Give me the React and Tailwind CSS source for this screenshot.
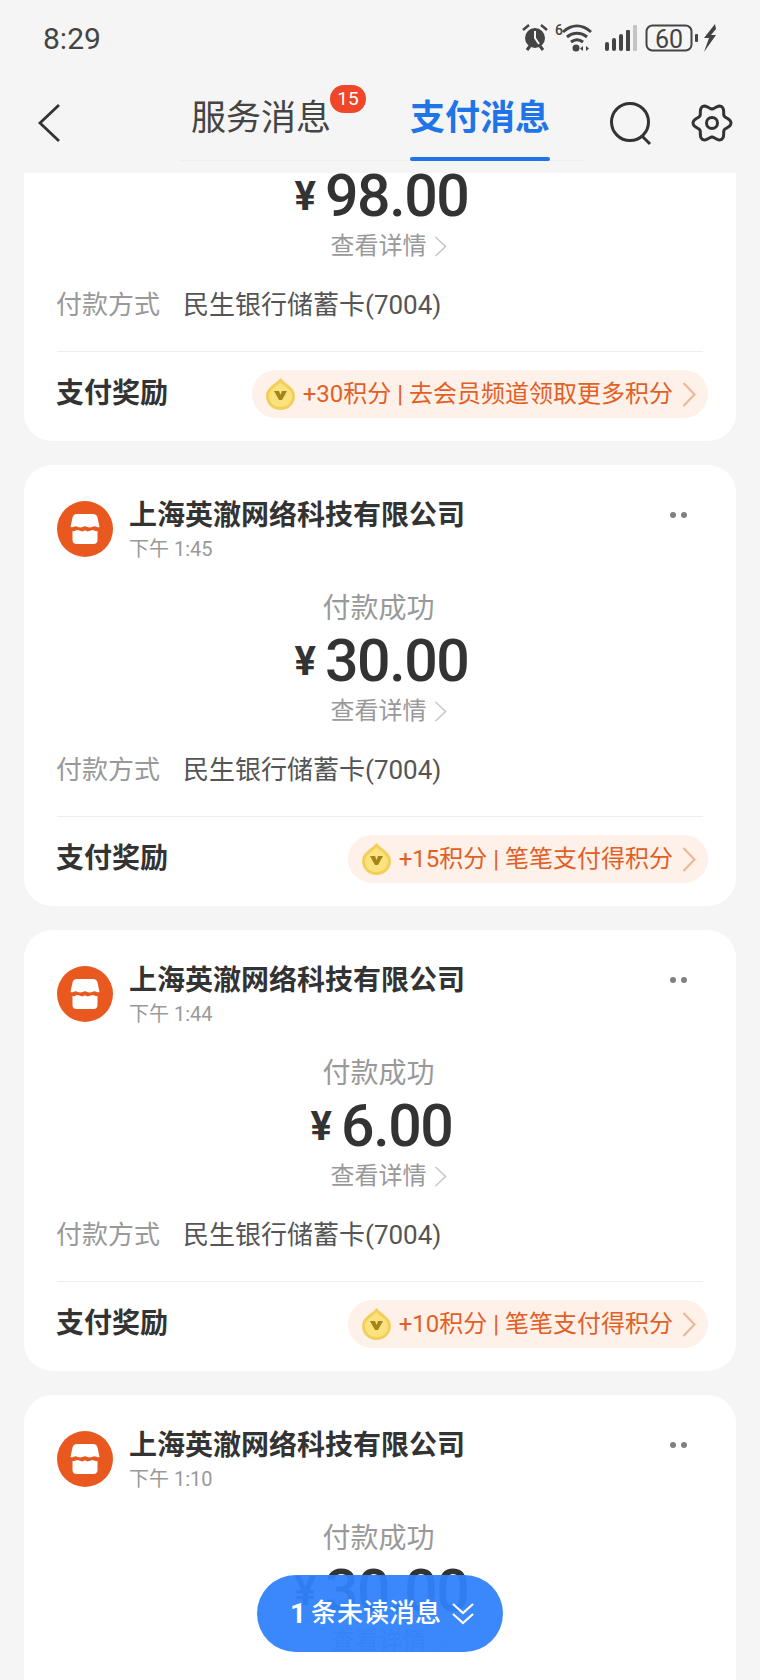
import React from 'react';

const cards = [
  { time: '下午 1:46', amount: '98.00', reward: '+30积分 | 去会员频道领取更多积分' },
  { time: '下午 1:45', amount: '30.00', reward: '+15积分 | 笔笔支付得积分' },
  { time: '下午 1:44', amount: '6.00', reward: '+10积分 | 笔笔支付得积分' },
  { time: '下午 1:10', amount: '30.00', reward: '+15积分 | 笔笔支付得积分' },
];

// six soft lobes round the centre
const gearPath = Array.from({ length: 73 }, (_, i) => {
  const a = (i * 5 * Math.PI) / 180;
  const r = 16.5 + 2.5 * Math.cos(6 * a);
  return `${i === 0 ? 'M' : 'L'}${(21 + r * Math.cos(a)).toFixed(2)} ${(21 + r * Math.sin(a)).toFixed(2)}`;
}).join('') + 'Z';

const StatusIcons = () => (
  <svg width="196" height="30" viewBox="0 0 196 30" className="text-[#444]">
    {/* alarm */}
    <circle cx="13" cy="15" r="10" fill="currentColor" />
    <path d="M13 8v7l4 6" stroke="#f5f5f5" strokeWidth="2" fill="none" />
    <path d="M1 7l6-5M25 7l-6-5" stroke="currentColor" strokeWidth="2.5" />
    <path d="M5 27l3-4M21 27l-3-4" stroke="currentColor" strokeWidth="3" />
    {/* wifi */}
    <text x="33" y="12" fontSize="14" fontWeight="500" fill="currentColor" fontFamily="Roboto, sans-serif">6</text>
    <path d="M41 9c9-8 19-8 28 0M45 14c6-5 14-5 20 0M49 19c4-3 8-3 12 0" stroke="currentColor" strokeWidth="3" fill="none" />
    <circle cx="54" cy="25" r="3.500" fill="currentColor" />
    <path d="M61 23v5l-3-2.500zM64 23v5l3-2.500z" fill="currentColor" />
    {/* signal */}
    <rect x="83" y="19" width="4" height="9" rx="2" fill="currentColor" />
    <rect x="90" y="15" width="4" height="13" rx="2" fill="currentColor" />
    <rect x="97" y="11" width="4" height="17" rx="2" fill="currentColor" />
    <rect x="104" y="7" width="4" height="21" rx="1" fill="currentColor" />
    <rect x="111" y="2" width="4" height="26" rx="1" fill="#c4c4c4" />
    {/* battery */}
    <rect x="124.500" y="2.500" width="45" height="25" rx="6" stroke="currentColor" strokeWidth="2" fill="none" />
    <text x="147" y="24.500" fontSize="25" textAnchor="middle" fill="currentColor" fontFamily="Roboto, sans-serif">60</text>
    <rect x="173" y="11" width="3" height="8" rx="1" fill="currentColor" />
    <path d="M193 1l-11 14h5l-5 14 12-17h-5l5-6-1-5z" fill="currentColor" />
  </svg>
);

const Header = () => (
  <div className="bg-[#f5f5f5] h-[173px] shrink-0">
    <div className="flex items-center justify-between h-[76px] pl-[43px] pr-[42px]">
      <span className="text-[30px] text-[#444]">8:29</span>
      <StatusIcons />
    </div>
    <div className="flex items-start h-[97px] pl-[36px] pr-[27px]">
      <svg width="26" height="40" viewBox="0 0 26 40" className="mt-[27px]">
        <path d="M23 2L4 20l19 18" stroke="#333" strokeWidth="2.800" fill="none" />
      </svg>
      <div className="flex-1">
        <div className="flex gap-[79px] border-b border-[#eeeeee] ml-[118px] pl-[11px] pr-[34px] w-fit h-[85px] items-start">
          <div className="relative pt-[20px]">
            <span className="text-[35px] leading-[46px] text-[#444]">服务消息</span>
            <span className="absolute left-[139px] top-[9px] w-[36px] h-[28px] rounded-full bg-[#f0462a] text-white text-[19px] leading-[28px] text-center">15</span>
          </div>
          <div className="relative pt-[20px] h-[85px]">
            <span className="text-[35px] leading-[46px] font-bold text-[#1f74e8]">支付消息</span>
            <div className="absolute left-0 right-0 bottom-0 h-[4px] rounded-full bg-[#1f74e8]" />
          </div>
        </div>
      </div>
      <svg width="44" height="46" viewBox="0 0 44 46" className="mt-[25px]">
        <circle cx="21" cy="21" r="18.500" stroke="#333" strokeWidth="3" fill="none" />
        <path d="M33 35l8 8" stroke="#333" strokeWidth="3" fill="none" />
      </svg>
      <svg width="42" height="42" viewBox="0 0 42 42" className="ml-[38px] mt-[26px]">
        <path d={gearPath} stroke="#333" strokeWidth="3" fill="none" strokeLinejoin="round" />
        <circle cx="21" cy="21" r="5.500" stroke="#333" strokeWidth="3" fill="none" />
      </svg>
    </div>
  </div>
);

const StoreIcon = () => (
  <div className="w-[56px] h-[56px] rounded-full bg-[#e8581f] flex items-center justify-center shrink-0">
    <svg width="30" height="30" viewBox="0 0 30 30">
      <path d="M7 0h16c2.500 0 4 1.500 4.500 3.500L29.500 13c-2 1-3.500-.8-5-.8s-3 1.300-4.800 1.300-3-1.300-4.700-1.300-3 1.300-4.700 1.300-3.300-1.300-4.800-1.300-3 1.800-5 .8L2.500 3.500C3 1.500 4.500 0 7 0z" fill="#fff" />
      <path d="M2.500 17c2 .6 3.500-.9 5-.9s3 1.300 4.700 1.300 2.800-1.300 2.800-1.300 1.100 1.300 2.800 1.300 3.200-1.300 4.700-1.300 3 1.500 5 .9v9c0 2.500-1.500 4-4 4H6.500c-2.500 0-4-1.500-4-4z" fill="#fff" />
    </svg>
  </div>
);

const Coin = () => (
  <svg width="29" height="32" viewBox="0 0 29 32" className="shrink-0">
    <path d="M14.500 0C18 5 29 9 29 18c0 8-6.500 14-14.500 14S0 26 0 18C0 9 11 5 14.500 0z" fill="#f3cf5a" />
    <path d="M14.500 4C17 8 26 11 26 18c0 6.500-5 11-11.500 11S3 24.500 3 18C3 11 12 8 14.500 4z" fill="#fbe27e" />
    <path d="M8 13h5l1.500 4 1.500-4h5l-5 9h-3z" fill="#a5841c" />
  </svg>
);

const Chevron = ({ w, h, color, sw }) => (
  <svg width={w} height={h} viewBox="0 0 14 24" preserveAspectRatio="none" className="shrink-0">
    <path d="M1.500 1L12.500 12 1.500 23" stroke={color} strokeWidth={sw} fill="none" />
  </svg>
);

const PayCard = ({ time, amount, reward }) => (
  <div className="bg-white rounded-[28px] h-[441px] shrink-0 px-[33px] pt-[36px]">
    <div className="flex gap-[16px] h-[56px] relative">
      <StoreIcon />
      <div className="-mt-[3px]">
        <div className="text-[28px] leading-[36px] font-semibold text-[#333]">上海英澈网络科技有限公司</div>
        <div className="text-[20px] leading-[30px] text-[#999]">{time}</div>
      </div>
      <div className="absolute right-[16px] top-[11px] flex gap-[5px]">
        <span className="w-[6px] h-[6px] rounded-full bg-[#808080]" />
        <span className="w-[6px] h-[6px] rounded-full bg-[#808080]" />
      </div>
    </div>
    <div className="mt-[32px] text-center text-[28px] leading-[40px] text-[#999] -ml-[3px]">付款成功</div>
    <div className="flex justify-center items-center h-[63px] ml-[3px] text-[#333]">
      <span className="text-[40px] font-bold mr-[9px] leading-none mt-[2px]">¥</span>
      <span className="text-[59px] font-medium leading-none tracking-[-1.400px]">{amount}</span>
    </div>
    <div className="flex justify-center items-center gap-[7px] h-[36px] ml-[17px] mt-[1px]">
      <span className="text-[24px] text-[#999]">查看详情</span>
      <Chevron w={13} h={21} color="#c4c4c4" sw={1.6} />
    </div>
    <div className="flex items-center h-[40px] mt-[21px] text-[26px] -ml-[1px]">
      <span className="text-[#999] w-[127px]">付款方式</span>
      <span className="text-[#555]">民生银行储蓄卡(7004)</span>
    </div>
    <div className="h-[1px] bg-[#eeeeee] mt-[26px]" />
    <div className="flex items-center justify-between h-[48px] mt-[18px] -mr-[5px]">
      <span className="text-[28px] font-bold text-[#333] -ml-[1px]">支付奖励</span>
      <div className="flex items-center h-[48px] rounded-full bg-[#fdf1ea] pl-[14px] pr-[12px]">
        <Coin />
        <span className="text-[24px] text-[#e45f25] ml-[8px] mr-[9px] whitespace-nowrap">{reward}</span>
        <Chevron w={14} h={25} color="#eeb896" sw={2.2} />
      </div>
    </div>
  </div>
);

export default function App() {
  return (
    <div className="relative w-[760px] h-[1680px] overflow-hidden bg-[#f5f5f5] flex flex-col font-['Roboto','Noto_Sans_CJK_SC',sans-serif]">
      <Header />
      <div className="flex-1 overflow-hidden px-[24px]">
        <div className="flex flex-col gap-[24px] -mt-[173px]">
          {cards.map((c, i) => (
            <PayCard key={i} {...c} />
          ))}
        </div>
      </div>

      {/* unread messages */}
      <div className="absolute left-[257px] top-[1575px] w-[246px] h-[77px] rounded-full bg-[#2f82fb]/95 flex items-center pl-[35px] text-white">
        <span className="text-[28px] font-bold mr-[5px] -ml-[2px]">1</span>
        <span className="text-[26px] font-medium">条未读消息</span>
        <svg width="24" height="24" viewBox="0 0 24 24" className="ml-[10px]">
          <path d="M2 2l10 9 10-9M2 12l10 9 10-9" stroke="#fff" strokeWidth="2.200" fill="none" />
        </svg>
      </div>
    </div>
  );
}
